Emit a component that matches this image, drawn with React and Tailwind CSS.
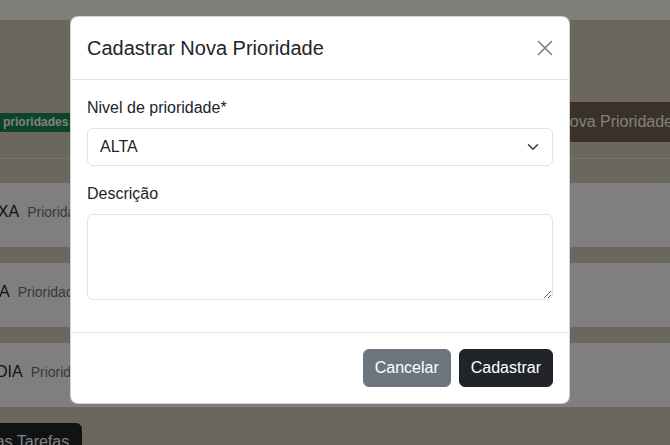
import React from 'react';

const cards = [
  { nivel: 'BAIXA', texto: 'Prioridade baixa' },
  { nivel: 'ALTA', texto: 'Prioridade alta' },
  { nivel: 'MÉDIA', texto: 'Prioridade média' },
];

const App = () => {
  return (
    <div className="relative h-[445px] w-full overflow-hidden bg-[#d6cebc] font-['Liberation_Sans',Arial,sans-serif] text-[#212529]">
      {/* Page behind the modal */}
      <div className="h-5 bg-[#fffcf2]" />
      <div className="-ml-[44px] w-[730px] pt-[82px]">
        <div className="flex h-10 items-center justify-between">
          <div className="ml-[29px] flex items-center">
            <span className="rounded-md bg-[#198754] px-[8px] py-[3px] text-xs font-bold leading-[13px] text-white">
              3 prioridades
            </span>
          </div>
          <button className="rounded-md border border-[#746250] bg-[#746250] px-3 py-[7px] text-base leading-6 text-white">
            Nova Prioridade
          </button>
        </div>
        <div className="mt-4 h-px bg-[#eae4d6]" />

        <div className="mt-6 flex flex-col gap-4">
          {cards.map((c) => (
            <div key={c.nivel} className="h-16 bg-white px-4 pt-[17px]">
              <span className="text-base leading-6">{c.nivel}</span>
              <span className="ml-2 text-sm leading-6 text-[#6c757d]">{c.texto}</span>
            </div>
          ))}
        </div>

        <div className="mt-4 -ml-2">
          <button className="rounded-md border border-[#212529] bg-[#212529] px-3 py-1.5 text-base leading-6 text-white">
            Minhas Tarefas
          </button>
        </div>
      </div>

      {/* Backdrop */}
      <div className="absolute inset-0 bg-black/50" />

      {/* Modal */}
      <div className="absolute left-[70px] top-[16px] w-[500px] rounded-lg border border-black/[0.175] bg-white">
        <div className="flex items-center justify-between border-b border-[#dee2e6] p-4">
          <h5 className="text-xl font-medium leading-[30px]">Cadastrar Nova Prioridade</h5>
          <button className="-m-2 p-2 text-black/50">
            <svg width="16" height="16" viewBox="0 0 16 16" fill="none" stroke="currentColor" strokeWidth="1.6">
              <path d="M1 1l14 14M15 1L1 15" />
            </svg>
          </button>
        </div>

        <div className="p-4">
          <div className="mb-4">
            <label className="mb-2 block text-base leading-6">Nivel de prioridade*</label>
            <div className="relative">
              <select className="block h-[38px] w-full appearance-none rounded-md border border-[#dee2e6] bg-white py-1.5 pl-3 pr-9 text-base leading-6 text-[#212529]">
                <option>ALTA</option>
                <option>MÉDIA</option>
                <option>BAIXA</option>
              </select>
              <svg className="pointer-events-none absolute right-3 top-[13px]" width="16" height="12" viewBox="0 0 16 16" fill="none" stroke="#343a40" strokeWidth="2" strokeLinecap="round" strokeLinejoin="round">
                <path d="m2 5 6 6 6-6" />
              </svg>
            </div>
          </div>
          <div className="mb-4">
            <label className="mb-2 block text-base leading-6">Descrição</label>
            <textarea rows={3} className="block h-[86px] w-full rounded-md border border-[#dee2e6] px-3 py-1.5 text-base leading-6" />
          </div>
        </div>

        <div className="flex justify-end gap-2 border-t border-[#dee2e6] px-4 py-4">
          <button className="rounded-md border border-[#6c757d] bg-[#6c757d] px-[11px] py-1.5 text-base leading-6 text-white">Cancelar</button>
          <button className="rounded-md border border-[#212529] bg-[#212529] px-[11px] py-1.5 text-base leading-6 text-white">Cadastrar</button>
        </div>
      </div>
    </div>
  );
};

export default App;
